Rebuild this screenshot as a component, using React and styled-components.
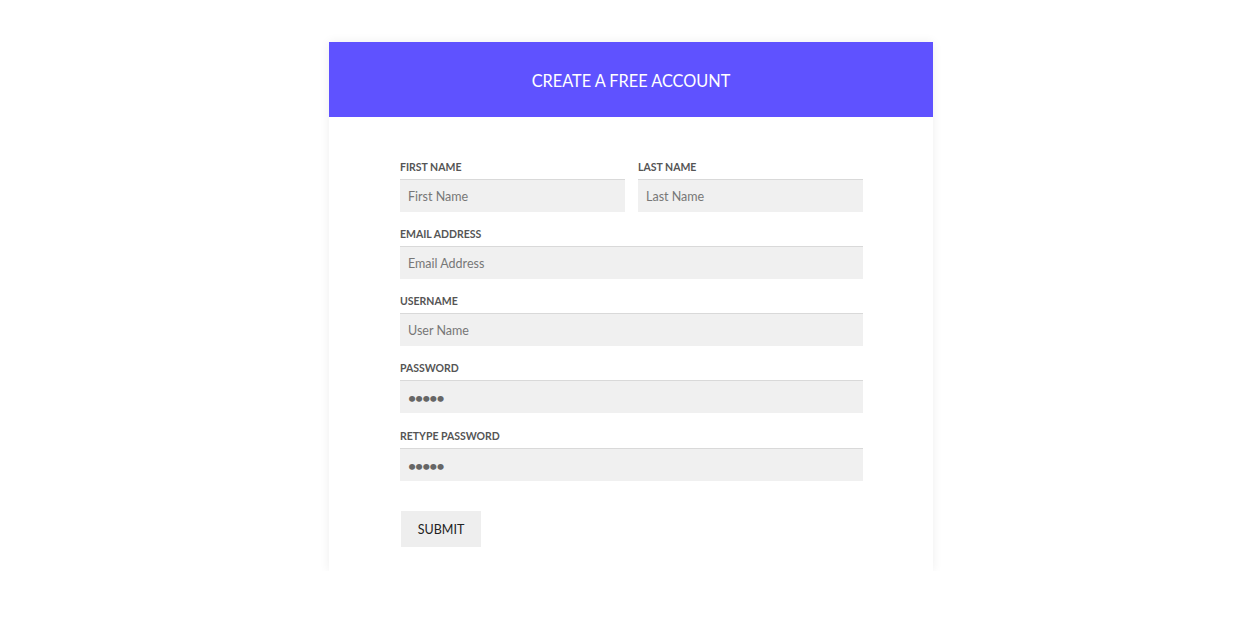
import React from "react";
import styled, { createGlobalStyle } from "styled-components";

const GlobalStyle = createGlobalStyle`
  body {
    margin: 0;
    background: #ffffff;
    font-family: Lato, "Open Sans", sans-serif;
  }
`;

const fields = [
  [
    { label: "First Name", placeholder: "First Name" },
    { label: "Last Name", placeholder: "Last Name" },
  ],
  [{ label: "Email Address", placeholder: "Email Address" }],
  [{ label: "Username", placeholder: "User Name" }],
  [{ label: "Password", value: "•••••", password: true }],
  [{ label: "Retype Password", value: "•••••", password: true, extra: true }],
];

const App = () => {
  return (
    <Page>
      <GlobalStyle />
      <Card>
        <Header>CREATE A FREE ACCOUNT</Header>
        <Form onSubmit={(e) => e.preventDefault()}>
          {fields.map((row, i) => (
            <Row key={i} cols={row.length} extra={row[0].extra}>
              {row.map((f) => (
                <Field key={f.label}>
                  <Label>{f.label}</Label>
                  <Input
                    placeholder={f.placeholder}
                    defaultValue={f.value}
                    password={f.password}
                    readOnly={f.password}
                  />
                </Field>
              ))}
            </Row>
          ))}
          <Submit type="submit">SUBMIT</Submit>
        </Form>
      </Card>
    </Page>
  );
};

export default App;

const Page = styled.div`
  display: flex;
  justify-content: center;
  padding: 42px 0 0 6px;
`;

const Card = styled.div`
  width: 604px;
  background: #fff;
  box-shadow: 0 0 10px rgba(0, 0, 0, 0.07);
`;

const Header = styled.div`
  height: 75px;
  background: #5f52ff;
  color: #fff;
  display: flex;
  align-items: center;
  justify-content: center;
  font-size: 16.3px;
  font-weight: 400;
  padding-top: 1px;
  box-sizing: border-box;
`;

const Form = styled.form`
  display: flex;
  flex-direction: column;
  gap: 16px;
  padding: 44px 70px 24px 71px;
`;

const Row = styled.div`
  display: grid;
  grid-template-columns: ${(p) => (p.cols === 2 ? "1fr 1fr" : "1fr")};
  column-gap: 13px;
  margin-top: ${(p) => (p.extra ? "1px" : "0")};
`;

const Field = styled.div`
  display: flex;
  flex-direction: column;
  gap: 6px;
`;

const Label = styled.label`
  font-size: 10.5px;
  line-height: 12px;
  font-weight: 700;
  text-transform: uppercase;
  color: #555;
`;

const Input = styled.input`
  height: 33px;
  box-sizing: border-box;
  border: none;
  border-top: 1px solid #d9d9d9;
  background: #f0f0f0;
  padding: 0 8px;
  font-family: inherit;
  font-size: ${(p) => (p.password ? "14px" : "12.5px")};
  font-weight: ${(p) => (p.password ? "700" : "400")};
  letter-spacing: ${(p) => (p.password ? "-1px" : "0")};
  color: #666;
  outline: none;
  &::placeholder {
    color: #777;
  }
`;

const Submit = styled.button`
  align-self: flex-start;
  margin: 14px 0 0 1px;
  width: 80px;
  height: 36px;
  border: none;
  background: #eee;
  color: #222;
  font-family: inherit;
  font-size: 12.5px;
  cursor: pointer;
`;
